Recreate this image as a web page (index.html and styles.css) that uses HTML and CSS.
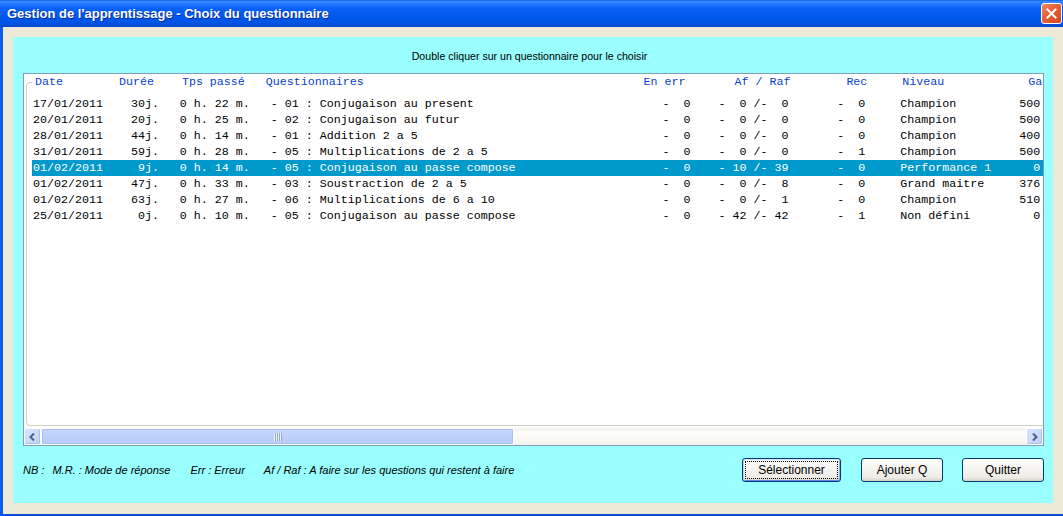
FILE: index.html
```html
<!DOCTYPE html>
<html lang="fr">
<head>
<meta charset="utf-8">
<title>Gestion de l'apprentissage - Choix du questionnaire</title>
<link rel="stylesheet" href="styles.css">
</head>
<body>
<div class="window">
  <div class="titlebar">
    <span class="title">Gestion de l'apprentissage - Choix du questionnaire</span>
    <button class="close" aria-label="Fermer">
      <svg width="11" height="11" viewBox="0 0 11 11"><path d="M1.5 1.5 L9.5 9.5 M9.5 1.5 L1.5 9.5" stroke="#fff" stroke-width="2" stroke-linecap="square"/></svg>
    </button>
  </div>
  <div class="client">
    <div class="panel">
      <p class="hint">Double cliquer sur un questionnaire pour le choisir</p>
      <div class="listbox">
        <div class="list-view">
          <fieldset class="frame">
            <legend class="legend">
              <div class="head">
                <span>Date</span><span>Durée</span><span>Tps passé</span><span>Questionnaires</span><span>En err</span><span>Af / Raf</span><span>Rec</span><span>Niveau</span><span>Ga</span>
              </div>
            </legend>
            <div class="row"><span>17/01/2011</span><span class="r">30j.</span><span class="r">0 h. 22 m.</span><span class="q">- 01 : Conjugaison au present</span><span>-  0</span><span class="r">-  0 /-  0</span><span class="r">-  0</span><span class="n">Champion</span><span class="r">500</span></div>
            <div class="row"><span>20/01/2011</span><span class="r">20j.</span><span class="r">0 h. 25 m.</span><span class="q">- 02 : Conjugaison au futur</span><span>-  0</span><span class="r">-  0 /-  0</span><span class="r">-  0</span><span class="n">Champion</span><span class="r">500</span></div>
            <div class="row"><span>28/01/2011</span><span class="r">44j.</span><span class="r">0 h. 14 m.</span><span class="q">- 01 : Addition 2 a 5</span><span>-  0</span><span class="r">-  0 /-  0</span><span class="r">-  0</span><span class="n">Champion</span><span class="r">400</span></div>
            <div class="row"><span>31/01/2011</span><span class="r">59j.</span><span class="r">0 h. 28 m.</span><span class="q">- 05 : Multiplications de 2 a 5</span><span>-  0</span><span class="r">-  0 /-  0</span><span class="r">-  1</span><span class="n">Champion</span><span class="r">500</span></div>
            <div class="row selected"><span>01/02/2011</span><span class="r">9j.</span><span class="r">0 h. 14 m.</span><span class="q">- 05 : Conjugaison au passe compose</span><span>-  0</span><span class="r">- 10 /- 39</span><span class="r">-  0</span><span class="n">Performance 1</span><span class="r">0</span></div>
            <div class="row"><span>01/02/2011</span><span class="r">47j.</span><span class="r">0 h. 33 m.</span><span class="q">- 03 : Soustraction de 2 a 5</span><span>-  0</span><span class="r">-  0 /-  8</span><span class="r">-  0</span><span class="n">Grand maitre</span><span class="r">376</span></div>
            <div class="row"><span>01/02/2011</span><span class="r">63j.</span><span class="r">0 h. 27 m.</span><span class="q">- 06 : Multiplications de 6 a 10</span><span>-  0</span><span class="r">-  0 /-  1</span><span class="r">-  0</span><span class="n">Champion</span><span class="r">510</span></div>
            <div class="row"><span>25/01/2011</span><span class="r">0j.</span><span class="r">0 h. 10 m.</span><span class="q">- 05 : Conjugaison au passe compose</span><span>-  0</span><span class="r">- 42 /- 42</span><span class="r">-  1</span><span class="n">Non défini</span><span class="r">0</span></div>
          </fieldset>
        </div>
        <div class="hscroll">
          <div class="sb-btn">
            <svg width="7" height="8" viewBox="0 0 7 8"><path d="M5 0.5 L1.5 4 L5 7.5" fill="none" stroke="#4d6185" stroke-width="2"/></svg>
          </div>
          <div class="sb-thumb"><span class="grip"></span></div>
          <div class="sb-track"></div>
          <div class="sb-btn">
            <svg width="7" height="8" viewBox="0 0 7 8"><path d="M2 0.5 L5.5 4 L2 7.5" fill="none" stroke="#4d6185" stroke-width="2"/></svg>
          </div>
        </div>
      </div>
      <div class="footer">
        <p class="notes"><span class="nb">NB :</span><span class="mr">M.R. : Mode de réponse</span><span class="err">Err : Erreur</span><span>Af / Raf : A faire sur les questions qui restent à faire</span></p>
        <div class="buttons">
          <button class="btn default"><span class="focus">Sélectionner</span></button>
          <button class="btn small">Ajouter Q</button>
          <button class="btn small">Quitter</button>
        </div>
      </div>
    </div>
  </div>
</div>
</body>
</html>
```
FILE: styles.css
```css
* { box-sizing: border-box; }
html, body { margin: 0; padding: 0; }
body { width: 1063px; height: 516px; overflow: hidden; background: #ece9d8; }

.window {
  width: 1063px;
  height: 516px;
  display: flex;
  flex-direction: column;
  background: #ece9d8;
  border-left: 3px solid #0a5ee8;
  border-bottom: 2px solid #0a4fd6;
}

.titlebar {
  height: 27px;
  margin-left: -3px;
  flex: none;
  display: flex;
  align-items: center;
  justify-content: space-between;
  padding: 0 1px 0 7px;
  background: linear-gradient(to bottom, #0a5ae8 0%, #3d8eff 6%, #2a7cff 12%, #0a62f8 30%, #0058ee 60%, #0054e3 85%, #0048cc 100%);
}
.title {
  font-family: "Liberation Sans", Arial, sans-serif;
  font-weight: bold;
  font-size: 13px;
  color: #fff;
  text-shadow: 1px 1px 0 #0b2b8f;
}
.close {
  width: 21px;
  height: 21px;
  padding: 0;
  margin: 0;
  border: 1px solid #fff;
  border-radius: 3px;
  background: linear-gradient(135deg, #ec8c68 0%, #e5623a 40%, #d2461c 100%);
  display: flex;
  align-items: center;
  justify-content: center;
}

.client {
  flex: 1;
  padding: 10px 0 0 10px;
}

.panel {
  width: 1040px;
  height: 466px;
  background: #99ffff;
  padding: 11px 9px 0 10px;
  display: flex;
  flex-direction: column;
}

.hint {
  margin: 0 0 9px;
  padding-right: 8px;
  height: 16px;
  line-height: 16px;
  text-align: center;
  font-family: "Liberation Sans", Arial, sans-serif;
  font-size: 10.6px;
  color: #000;
}

.listbox {
  height: 373px;
  border: 1px solid #7f9db9;
  background: #fff;
  display: flex;
  flex-direction: column;
  overflow: hidden;
}

.list-view {
  height: 354px;
  flex: none;
  overflow: hidden;
}

.frame {
  margin: 0 -4px 0 2px;
  padding: 6px 0 0 5px;
  height: 352px;
  min-width: 0;
  border: 1px solid #d0cfc4;
  border-radius: 4px;
  font-family: "Liberation Mono", "Courier New", monospace;
  font-size: 11.666px;
  line-height: 16px;
}

.legend {
  padding: 0 0 0 3px;
  margin: 0;
  background: #fff;
}

.head {
  display: grid;
  grid-template-columns: 12ch 9ch 12ch 54ch 13ch 16ch 8ch 18ch 2ch;
  color: #0a3fd0;
  white-space: pre;
  height: 16px;
}

.row {
  display: grid;
  grid-template-columns: 10ch 8ch 13ch 59ch 4ch 14ch 11ch 18ch 7ch;
  height: 16px;
  padding-left: 1px;
  color: #000;
  white-space: pre;
}
.row .r { text-align: right; }
.row .q { padding-left: 3ch; }
.row .n { padding-left: 5ch; }
.row.selected { background: #0099cc; color: #fff; }

.hscroll {
  height: 17px;
  flex: none;
  display: flex;
  background: linear-gradient(to bottom, #f3f1ec, #fefefb 30%, #f4f2ec);
}
.sb-btn {
  width: 17px;
  height: 17px;
  flex: none;
  border: 1px solid #fff;
  border-radius: 2px;
  background: linear-gradient(135deg, #dbe6fd, #bdd0fb);
  box-shadow: inset -1px -1px 0 #a8bff0;
  display: flex;
  align-items: center;
  justify-content: center;
}
.sb-thumb {
  width: 473px;
  height: 17px;
  flex: none;
  border: 1px solid #fff;
  border-radius: 2px;
  background: linear-gradient(to bottom, #c8d7fd, #bdd0fb 50%, #b7cbfa);
  box-shadow: inset 0 0 0 1px #a8bdf2;
  display: flex;
  align-items: center;
  justify-content: center;
}
.grip {
  width: 8px;
  height: 8px;
  background: repeating-linear-gradient(to right, #eef3fe 0, #eef3fe 1px, #8ca7e8 1px, #8ca7e8 2px);
}
.sb-track { flex: 1; }

.footer {
  flex: 1;
  display: flex;
  align-items: flex-start;
  justify-content: space-between;
  padding-top: 12px;
}
.notes {
  margin: 0;
  height: 24px;
  line-height: 24px;
  font-family: "Liberation Sans", Arial, sans-serif;
  font-style: italic;
  font-size: 11px;
  color: #000;
  white-space: pre;
}
.notes .nb { margin-right: 8px; }
.notes .mr { margin-right: 20px; }
.notes .err { margin-right: 19px; }

.buttons {
  display: flex;
  gap: 20px;
}
.btn {
  height: 24px;
  margin: 0;
  padding: 0;
  border: 1px solid #003c74;
  border-radius: 3px;
  background: linear-gradient(to bottom, #ffffff 0%, #f6f5f1 40%, #ecebe6 85%, #d6d0c5 100%);
  font-family: "Liberation Sans", Arial, sans-serif;
  font-size: 12px;
  color: #000;
  display: flex;
  align-items: center;
  justify-content: center;
}
.btn.default {
  width: 99px;
  box-shadow: inset 0 1px 0 #cee7ff, inset 1px 0 0 #bcd4f6, inset -1px 0 0 #89ade4, inset 0 -1px 0 #6982ee;
  padding: 2px;
}
.btn.default .focus {
  width: 100%;
  height: 100%;
  border: 1px dotted #000;
  display: flex;
  align-items: center;
  justify-content: center;
}
.btn.small { width: 82px; }
.buttons .btn.small:last-child { margin-left: -1px; }
```
